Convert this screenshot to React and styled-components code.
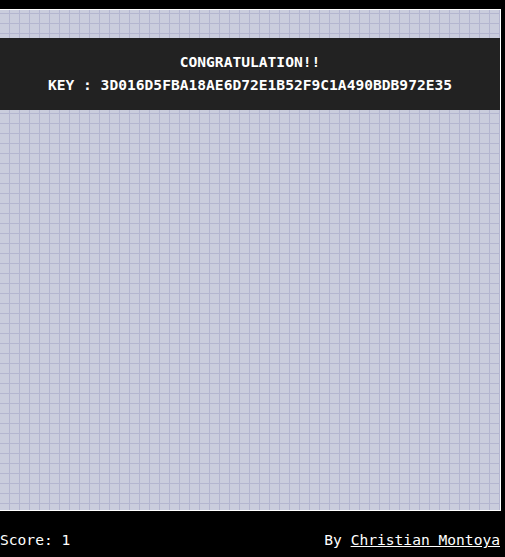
import React from "react"
import styled, { createGlobalStyle } from "styled-components"

const GlobalStyle = createGlobalStyle`
    html, body {
        margin: 0;
        padding: 0;
        background: #000;
    }
    body {
        font-family: "DejaVu Sans Mono", "Liberation Mono", monospace;
        color: #fff;
    }
`

const Page = styled.div`
    width: 505px;
    height: 557px;
    padding-top: 9px;
    box-sizing: border-box;
    display: flex;
    flex-direction: column;
`

const Board = styled.div`
    position: relative;
    width: 500px;
    height: 500px;
    border: 1px solid #fff;
    border-left: none;
    background-color: #cacddd;
    background-image: linear-gradient(
            to right,
            transparent 9px,
            #b4b6d0 9px,
            #b4b6d0 10px
        ),
        linear-gradient(to bottom, transparent 9px, #b4b6d0 9px, #b4b6d0 10px);
    background-size: 10px 10px;
    background-position: 0 4px;
`

const Banner = styled.div`
    position: absolute;
    top: 28px;
    left: 0;
    right: 0;
    background: #222;
    padding: 12px 0 14px;
    text-align: center;
    font-weight: bold;
    font-size: 14.6px;
    line-height: 23px;
`

const Line = styled.div`
    white-space: pre;
`

const Footer = styled.div`
    display: flex;
    justify-content: space-between;
    width: 500px;
    padding-top: 20px;
    font-size: 14.6px;
    line-height: 17px;
`

const Credit = styled.span`
    white-space: pre;
`

const Author = styled.a`
    color: #fff;
    text-decoration: underline;
`

const App = () => (
    <Page>
        <GlobalStyle />
        <Board>
            <Banner>
                <Line>CONGRATULATION!!</Line>
                <Line>KEY : 3D016D5FBA18AE6D72E1B52F9C1A490BDB972E35</Line>
            </Banner>
        </Board>
        <Footer>
            <span>Score: 1</span>
            <Credit>
                By <Author href="#">Christian Montoya</Author>
            </Credit>
        </Footer>
    </Page>
)

export default App
